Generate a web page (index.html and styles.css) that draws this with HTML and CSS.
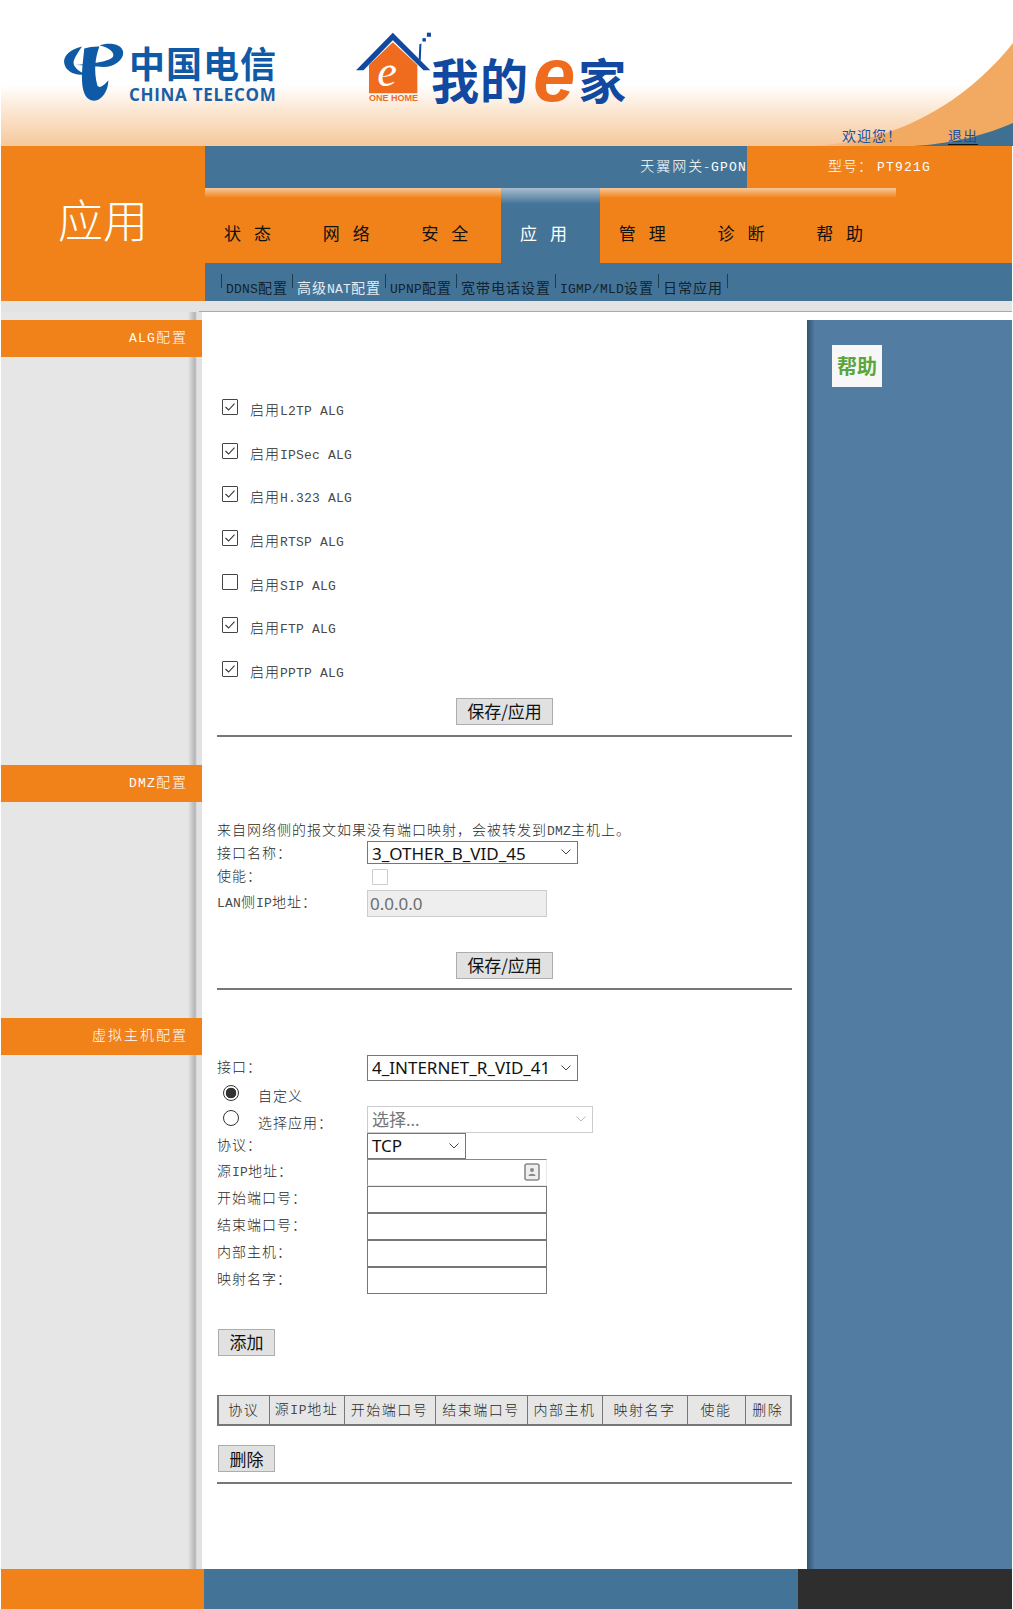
FILE: index.html
```html
<!DOCTYPE html>
<html lang="zh-CN">
<head>
  <meta charset="UTF-8">
  <meta name="viewport" content="width=device-width, initial-scale=1.0">
  <title>应用</title>
  <link rel="stylesheet" href="styles.css">
</head>
<body>
<div class="page">

  <!-- Header with logos -->
  <div class="header">
    <svg class="swoosh" viewBox="0 0 240 110" aria-hidden="true">
      <defs>
        <linearGradient id="swooshFade" x1="0" x2="1" y1="0" y2="0">
          <stop offset="0" stop-color="#f2a962" stop-opacity="0"/>
          <stop offset="0.35" stop-color="#f2a962"/>
        </linearGradient>
      </defs>
      <path d="M32 110 C90 108 130 95 170 70 C195 55 222 30 240 7 L240 110 Z" fill="url(#swooshFade)"/>
      <path d="M140 110 C180 108 215 98 240 87 L240 110 Z" fill="#3f7092"/>
    </svg>

    <div class="telecom">
      <svg class="emblem" viewBox="66 62 188 182" aria-hidden="true">
        <g fill="#0f5aa6">
          <path d="M125 76 C90 84 68 104 71 126 C75 152 105 166 136 160 C112 150 96 136 100 120 C104 105 115 92 125 76 Z"/>
          <path d="M178 72 C205 62 246 66 250 92 C252 116 225 136 190 138 L105 131 C130 130 200 125 218 108 C228 95 205 78 178 72 Z"/>
          <path d="M132 82 C145 78 165 75 178 76 C165 110 160 150 172 195 C180 205 195 190 205 178 C205 210 185 240 162 240 C135 240 125 210 125 170 C125 140 130 105 132 82 Z"/>
        </g>
      </svg>
      <div class="telecom-text">
        <div class="telecom-cn">中国电信</div>
        <div class="telecom-en">CHINA TELECOM</div>
      </div>
    </div>

    <div class="ehome">
      <svg class="house" viewBox="50 38 220 185" aria-hidden="true">
        <path d="M88 218 L88 135 L158 68 L230 135 L230 218 Z" fill="#ef6c1f"/>
        <path d="M50 150 L158 40 L268 150 L248 150 L158 62 L72 150 Z" fill="#1148a0"/>
        <rect x="258" y="40" width="12" height="12" fill="#1148a0"/>
        <rect x="245" y="56" width="10" height="10" fill="#1148a0"/>
        <path d="M236 74 L242 72 L240 122 L234 118 Z" fill="#1148a0"/>
        <text class="house-e" x="112" y="196">e</text>
      </svg>
      <div class="ehome-text">我的<span class="ehome-e">e</span>家</div>
    </div>
    <div class="onehome">ONE HOME</div>

    <div class="welcome">
      <span>欢迎您！</span>
      <a href="#" class="logout">退出</a>
    </div>
  </div>

  <!-- Title and navigation -->
  <div class="top">
    <div class="title">应用</div>
    <div class="top-right">
      <div class="info">
        <div class="info-name">天翼网关-<span class="la">GPON</span></div>
        <div class="info-model">型号： <span class="la">PT921G</span></div>
      </div>
      <div class="tabs">
        <a class="tab" href="#">状态</a>
        <a class="tab" href="#">网络</a>
        <a class="tab" href="#">安全</a>
        <a class="tab active" href="#">应用</a>
        <a class="tab" href="#">管理</a>
        <a class="tab" href="#">诊断</a>
        <a class="tab" href="#">帮助</a>
      </div>
      <div class="subnav">
        <a class="sub" href="#"><span class="la">DDNS</span>配置</a>
        <a class="sub current" href="#">高级<span class="la">NAT</span>配置</a>
        <a class="sub" href="#"><span class="la">UPNP</span>配置</a>
        <a class="sub" href="#">宽带电话设置</a>
        <a class="sub" href="#"><span class="la">IGMP/MLD</span>设置</a>
        <a class="sub" href="#">日常应用</a>
        <span class="sub"></span>
      </div>
    </div>
  </div>

  <div class="band"></div>

  <div class="main">
    <!-- Left menu -->
    <div class="side">
      <div class="side-item side-alg"><span class="la">ALG</span>配置</div>
      <div class="side-item side-dmz"><span class="la">DMZ</span>配置</div>
      <div class="side-item side-vhost">虚拟主机配置</div>
    </div>

    <!-- Form area -->
    <div class="content">
      <div class="alg-list">
        <label class="alg-row"><input type="checkbox" checked><span>启用<span class="la">L2TP ALG</span></span></label>
        <label class="alg-row"><input type="checkbox" checked><span>启用<span class="la">IPSec ALG</span></span></label>
        <label class="alg-row"><input type="checkbox" checked><span>启用<span class="la">H.323 ALG</span></span></label>
        <label class="alg-row"><input type="checkbox" checked><span>启用<span class="la">RTSP ALG</span></span></label>
        <label class="alg-row"><input type="checkbox"><span>启用<span class="la">SIP ALG</span></span></label>
        <label class="alg-row"><input type="checkbox" checked><span>启用<span class="la">FTP ALG</span></span></label>
        <label class="alg-row"><input type="checkbox" checked><span>启用<span class="la">PPTP ALG</span></span></label>
      </div>
      <div class="save-row save-alg"><button class="btn btn-save">保存/应用</button></div>
      <div class="rule"></div>

      <p class="dmz-note">来自网络侧的报文如果没有端口映射，会被转发到<span class="la">DMZ</span>主机上。</p>
      <div class="row row-23"><div class="lbl">接口名称：</div><select class="sel sel-wide"><option>3_OTHER_B_VID_45</option></select></div>
      <div class="row row-26"><div class="lbl">使能：</div><input class="dmz-check" type="checkbox" disabled></div>
      <div class="row row-27"><div class="lbl"><span class="la">LAN</span>侧<span class="la">IP</span>地址：</div><input class="txt txt-off" type="text" value="0.0.0.0" disabled></div>
      <div class="save-row save-dmz"><button class="btn btn-save">保存/应用</button></div>
      <div class="rule rule-dmz"></div>

      <div class="row row-26 vhost-first"><div class="lbl">接口：</div><select class="sel sel-wide"><option>4_INTERNET_R_VID_41</option></select></div>
      <div class="row row-25"><div class="lbl lbl-radio"><input type="radio" name="mode" checked><span>自定义</span></div></div>
      <div class="row row-27"><div class="lbl lbl-radio"><input type="radio" name="mode"><span>选择应用：</span></div><select class="sel sel-app" disabled><option>选择...</option></select></div>
      <div class="row row-26"><div class="lbl">协议：</div><select class="sel sel-proto"><option>TCP</option></select></div>
      <div class="row row-27">
        <div class="lbl">源<span class="la">IP</span>地址：</div>
        <div class="src-wrap">
          <input class="txt txt-src" type="text">
          <svg class="contact-icon" viewBox="0 0 16 18" aria-hidden="true">
            <rect x="1" y="1" width="14" height="16" rx="2" fill="#eee" stroke="#8a8a8a" stroke-width="1.6"/>
            <circle cx="8" cy="7" r="2" fill="#8a8a8a"/>
            <path d="M4.5 13 C4.5 10 11.5 10 11.5 13 Z" fill="#8a8a8a"/>
          </svg>
        </div>
      </div>
      <div class="row row-27"><div class="lbl">开始端口号：</div><input class="txt" type="text"></div>
      <div class="row row-27"><div class="lbl">结束端口号：</div><input class="txt" type="text"></div>
      <div class="row row-27"><div class="lbl">内部主机：</div><input class="txt" type="text"></div>
      <div class="row row-27"><div class="lbl">映射名字：</div><input class="txt" type="text"></div>

      <button class="btn btn-small btn-add">添加</button>

      <table class="rules">
        <tr>
          <th>协议</th>
          <th>源<span class="la">IP</span>地址</th>
          <th>开始端口号</th>
          <th>结束端口号</th>
          <th>内部主机</th>
          <th>映射名字</th>
          <th>使能</th>
          <th>删除</th>
        </tr>
      </table>

      <button class="btn btn-small btn-del">删除</button>
      <div class="rule"></div>
    </div>

    <!-- Help panel -->
    <div class="help">
      <a class="help-box" href="#">帮助</a>
    </div>
  </div>

  <div class="footer">
    <div class="foot-orange"></div>
    <div class="foot-blue"></div>
    <div class="foot-dark"></div>
  </div>
</div>
</body>
</html>
```

FILE: styles.css
```css
* {
  box-sizing: border-box;
}
body {
  margin: 0;
  background: #fff;
  color: #2a2a2a;
  font-family: "Noto Sans CJK SC", sans-serif;
  font-size: 14px;
  font-weight: 300;
  line-height: 20px;
  letter-spacing: 1px;
}
a {
  color: inherit;
  text-decoration: none;
}
.page {
  width: 1011px;
  height: 1609px;
  margin-left: 1px;
}
/* Latin text has its own narrow font, like the old bitmap look */
.la {
  font-family: "Liberation Mono", monospace;
  font-size: 13px;
  letter-spacing: 0.2px;
}
.content .la {
  color: #4a4a4a;
}

/* Header */
.header {
  position: relative;
  display: flex;
  height: 146px;
  padding: 42px 0 0 61px;
  background: linear-gradient(#fff 0, #fff 58%, #fbe4cd 78%, #f6c89c 100%);
}
.swoosh {
  position: absolute;
  right: -1px;
  bottom: 0;
  width: 240px;
  height: 110px;
}
.telecom {
  display: flex;
  width: 294px;
}
.emblem {
  width: 63px;
  height: 60px;
}
.telecom-text {
  margin-left: 4px;
}
.telecom-cn {
  color: #0f5aa6;
  font-size: 36px;
  font-weight: 700;
  line-height: 40px;
  letter-spacing: 1px;
  white-space: nowrap;
}
.telecom-en {
  margin-top: 4px;
  color: #1a5ea6;
  font-family: "Open Sans", sans-serif;
  font-size: 17px;
  font-weight: 700;
  line-height: 18px;
  letter-spacing: 0.7px;
  white-space: nowrap;
}
.ehome {
  display: flex;
  margin-top: -10px;
}
.house {
  width: 75px;
  height: 63px;
}
.house-e {
  fill: #fff;
  font-family: "Liberation Serif", serif;
  font-size: 130px;
  font-style: italic;
}
.onehome {
  position: absolute;
  left: 368px;
  top: 93px;
  color: #ef6c1f;
  font-family: "Liberation Sans", sans-serif;
  font-size: 9px;
  font-weight: 700;
  line-height: 11px;
  letter-spacing: 0;
}
.ehome-text {
  margin: 16px 0 0 0;
  color: #1148a0;
  font-size: 48px;
  font-weight: 700;
  line-height: 60px;
  letter-spacing: 1px;
  white-space: nowrap;
}
.ehome-e {
  margin: 0 2px 0 4px;
  color: #ef6c1f;
  font-family: "Liberation Sans", sans-serif;
  font-size: 76px;
  font-style: italic;
  line-height: 0;
  vertical-align: -2px;
}
.welcome {
  position: absolute;
  left: 841px;
  top: 125px;
  display: flex;
  color: #1c4fa0;
  font-weight: 400;
  white-space: nowrap;
}
.logout {
  margin-left: 46px;
  border-bottom: 1px solid #111;
  height: 20px;
}

/* Title and navigation */
.top {
  display: flex;
  height: 155px;
}
.title {
  width: 204px;
  padding: 46px 0 0 57px;
  background: #f08219;
  color: #fff;
  font-size: 45px;
  line-height: 54px;
  letter-spacing: 0;
}
.top-right {
  flex: 1;
  display: flex;
  flex-direction: column;
}
.info {
  display: flex;
  height: 42px;
  color: #fff;
  line-height: 38px;
  background: #f08219;
}
.info .la {
  letter-spacing: 1.2px;
}
.info-name {
  width: 542px;
  background: #437497;
  letter-spacing: 2px;
  text-align: right;
}
.info-model {
  padding-left: 81px;
}
.tabs {
  display: flex;
  height: 75px;
  background:
    linear-gradient(#f7c89a 0, #f08219 10px) left top / 691px 100% no-repeat,
    #f08219;
}
.tab {
  width: 98.7px;
  padding: 35px 0 0 19px;
  color: #111;
  font-size: 17px;
  font-weight: 400;
  line-height: 20px;
  letter-spacing: 13px;
  white-space: nowrap;
}
.tab.active {
  background: linear-gradient(#a9bdcd 0, #437497 16px);
  color: #fff;
}
.subnav {
  display: flex;
  align-items: flex-start;
  height: 38px;
  padding: 11px 0 0 16px;
  background: #437497;
  color: #12222e;
  font-weight: 400;
}
.sub {
  height: 14px;
  padding: 6px 4px 0;
  border-left: 1px solid #1f3d52;
  line-height: 14px;
  white-space: nowrap;
}
.sub.current {
  color: #e4ecf2;
}
.band {
  height: 11px;
  background: linear-gradient(#a9a9a9, #a9a9a9) right bottom / calc(100% - 198px) 1px no-repeat, #e3e3e3;
}

/* Main three columns */
.main {
  display: flex;
  height: 1257px;
}
.side {
  width: 201px;
  padding-top: 8px;
  background: linear-gradient(to right, #e6e6e6 0, #e6e6e6 187px, #b4b4b4 194px, #e2e2e2 196px, #e2e2e2 201px);
}
.side-item {
  height: 37px;
  padding-right: 14px;
  background: #f08219;
  color: #fff;
  line-height: 33px;
  letter-spacing: 2px;
  text-align: right;
}
.side-item .la {
  letter-spacing: 1.2px;
}
.side-dmz {
  margin-top: 408px;
}
.side-vhost {
  margin-top: 216px;
}
.content {
  width: 605px;
  padding: 0 15px;
  background: #fff;
}
.help {
  flex: 1;
  margin-top: 8px;
  padding: 25px 0 0 25px;
  background: linear-gradient(to right, #2f5472 0, #527ca2 8px);
}
.help-box {
  display: block;
  width: 50px;
  height: 42px;
  background: #f7f7f7;
  color: #5aa63c;
  font-size: 20px;
  font-weight: 700;
  line-height: 42px;
  letter-spacing: 0;
  text-align: center;
}

/* ALG list */
.alg-list {
  padding-top: 87px;
}
.alg-row {
  display: flex;
  height: 43.67px;
  padding-left: 5px;
}
.alg-row > span {
  margin: 0 0 0 12px;
}
input[type="checkbox"] {
  appearance: none;
  flex: none;
  width: 16px;
  height: 16px;
  margin: 0;
  border: 1px solid #444;
  border-radius: 1px;
  background: #fff;
}
input[type="checkbox"]:checked {
  background: url("data:image/svg+xml,%3Csvg xmlns='http://www.w3.org/2000/svg' viewBox='0 0 14 14'%3E%3Cpath d='M2.5 7 L5.6 10 L11.5 3.6' fill='none' stroke='%23333' stroke-width='1.1'/%3E%3C/svg%3E") center / 14px 14px no-repeat #fff;
}
input.dmz-check {
  margin: 5px 0 0 5px;
  border-color: #ccc;
}
input[type="radio"] {
  appearance: none;
  flex: none;
  width: 16px;
  height: 16px;
  margin: 0;
  border: 1px solid #333;
  border-radius: 50%;
  background: #fff;
}
input[type="radio"]:checked {
  background: radial-gradient(circle, #333 0, #333 5px, #fff 5.6px);
}

/* Buttons */
.btn {
  height: 27px;
  padding: 0;
  border: 1px solid #adadad;
  background: #e1e1e1;
  color: #111;
  font-family: "Noto Sans CJK SC", sans-serif;
  font-size: 17px;
  font-weight: 400;
  line-height: 24px;
  letter-spacing: 0;
}
.btn-save {
  width: 97px;
}
.btn-small {
  display: block;
  width: 57px;
  margin-left: 1px;
}
.save-row {
  display: flex;
  justify-content: center;
}
.save-alg {
  margin-top: -6.7px;
}
.save-dmz {
  margin-top: 35px;
}
.rule {
  height: 2px;
  margin-top: 10px;
  background: #777;
}
.rule-dmz {
  margin-top: 9px;
}

/* Form rows */
.dmz-note {
  margin: 82px 0 0;
  height: 22px;
  line-height: 20px;
  white-space: nowrap;
}
.row {
  display: flex;
}
.row-23 {
  height: 23px;
}
.row-25 {
  height: 25px;
}
.row-26 {
  height: 26px;
}
.row-27 {
  height: 27px;
}
.vhost-first {
  margin-top: 65px;
}
.lbl {
  flex: none;
  width: 150px;
  line-height: 22px;
}
.lbl-radio {
  display: flex;
  gap: 19px;
  padding: 4px 0 0 6px;
}
.lbl-radio span {
  margin-top: -1px;
}
.row-27 .lbl-radio span {
  margin-top: 1px;
}
.sel {
  appearance: none;
  height: 100%;
  padding: 0 0 0 4px;
  border: 1px solid #767676;
  border-radius: 0;
  background: url("data:image/svg+xml,%3Csvg xmlns='http://www.w3.org/2000/svg' viewBox='0 0 10 6'%3E%3Cpath d='M0.5 0.5 L5 5 L9.5 0.5' fill='none' stroke='%23444' stroke-width='1'/%3E%3C/svg%3E") right 6px center / 10px 6px no-repeat #fff;
  color: #111;
  font-family: "Noto Sans", "Noto Sans CJK SC", sans-serif;
  font-size: 17px;
  font-weight: 400;
  letter-spacing: 0;
}
.sel-wide {
  width: 211px;
}
.sel-app {
  width: 226px;
  border-color: #ccc;
  color: #777;
  opacity: 1;
  background-image: url("data:image/svg+xml,%3Csvg xmlns='http://www.w3.org/2000/svg' viewBox='0 0 10 6'%3E%3Cpath d='M0.5 0.5 L5 5 L9.5 0.5' fill='none' stroke='%23bbb' stroke-width='1'/%3E%3C/svg%3E");
}
.sel-proto {
  width: 99px;
}
.txt {
  width: 180px;
  height: 27px;
  margin: 0;
  padding: 0 2px;
  border: 1px solid #767676;
  border-radius: 0;
  background: #fff;
  color: #111;
  font-family: "Noto Sans", sans-serif;
  font-size: 17px;
  font-weight: 400;
  letter-spacing: 0;
}
.txt-off {
  border-color: #ccc;
  background: #eee;
  color: #6d6d6d;
}
.src-wrap {
  position: relative;
  width: 180px;
}
.txt-src {
  border-color: #888 #e8e8e8 #e8e8e8 #888;
}
.contact-icon {
  position: absolute;
  left: 157px;
  top: 4px;
  width: 16px;
  height: 18px;
}
.btn-add {
  margin-top: 35px;
}
.btn-del {
  margin-top: 19px;
}

/* Rules table */
.rules {
  width: 573px;
  margin-top: 39px;
  border-collapse: collapse;
  table-layout: fixed;
  border: 1px solid #777;
  border-left-width: 2px;
  border-right-width: 2px;
  border-bottom-width: 2px;
}
.rules th {
  height: 30px;
  padding: 0 0 2px;
  border: 1px solid #777;
  background: #e6e6e6;
  color: #2a2a2a;
  font-weight: 300;
  letter-spacing: 1.5px;
  text-align: center;
  white-space: nowrap;
}
.rules .la {
  letter-spacing: 0.8px;
}
.rules th:nth-child(1) { width: 51px; }
.rules th:nth-child(2) { width: 75px; }
.rules th:nth-child(3) { width: 91px; }
.rules th:nth-child(4) { width: 92px; }
.rules th:nth-child(5) { width: 75px; }
.rules th:nth-child(6) { width: 85px; }
.rules th:nth-child(7) { width: 58px; }
.rules th:nth-child(8) { width: 46px; }

/* Footer */
.footer {
  display: flex;
  height: 40px;
}
.foot-orange {
  width: 203px;
  background: #f08219;
}
.foot-blue {
  width: 594px;
  background: #437497;
}
.foot-dark {
  flex: 1;
  background: #2e2e2e;
}
```
